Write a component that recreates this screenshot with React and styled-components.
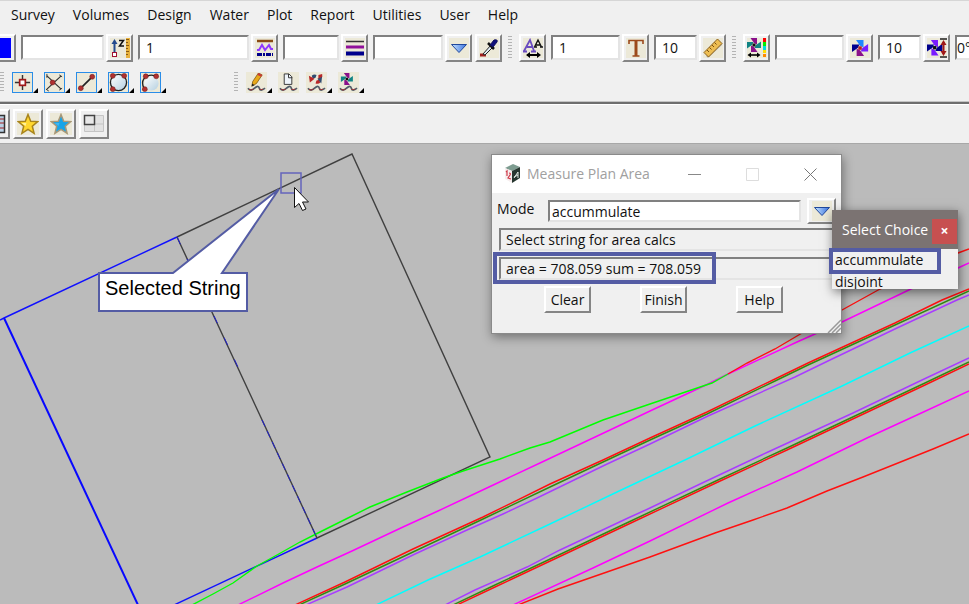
import React, { useState } from "react";
import styled, { createGlobalStyle } from "styled-components";

const GlobalStyle = createGlobalStyle`
	* {
		box-sizing: border-box;
	}
	body {
		margin: 0;
		overflow: hidden;
		font-family: "Open Sans", "Noto Sans", sans-serif;
		font-size: 14px;
		color: #111;
	}
	button,
	input {
		font: inherit;
		color: inherit;
	}
	svg {
		display: block;
	}
`;

const Wrapper = styled.div`
	min-height: 100vh;
	display: flex;
	flex-direction: column;
	background-color: #f0f0f0;
`;

//Menu

const Menu = styled.nav`
	display: flex;
	gap: 18px;
	height: 30px;
	padding: 0 0 2px 11px;
	border-top: 1px solid #d6d6d6;
	overflow: hidden;
`;

const MenuButton = styled.button`
	padding: 0;
	border: 0;
	background: none;
	white-space: nowrap;
`;

//Toolbars

const Toolbar = styled.div`
	display: flex;
	align-items: center;
	height: ${(props) => props.$height}px;
	overflow: hidden;
`;

const FieldBar = styled(Toolbar)`
	gap: 5px;
`;

const SnapBar = styled(Toolbar)`
	gap: 6px;
	padding-bottom: 1px;
	margin: 0 0 2px -1px;
`;

const FavouriteBar = styled(Toolbar)`
	gap: 3px;
	border-top: 2px solid #6e6e6e;
	border-bottom: 1px solid #a8a8a8;
	box-shadow: inset 0 1px 0 #fff;
	outline: 1px solid #c4c4c4;
	outline-offset: 0;
`;

const Group = styled.div`
	display: flex;
	align-items: center;
	gap: ${(props) => props.$gap || 2}px;
	flex: none;
`;

const Grip = styled.span`
	flex: none;
	width: 4px;
	height: ${(props) => props.$height || 24}px;
	margin: 0 2px 0 1px;
	background: repeating-linear-gradient(#b4b4b4 0 1px, #f0f0f0 1px 3px);
`;

const Raised = styled.button`
	display: flex;
	flex: none;
	align-items: center;
	justify-content: center;
	padding: 0;
	border: 2px solid;
	border-color: #fff #858585 #858585 #fff;
	background-color: #f0f0f0;
`;

const ToolButton = styled(Raised)`
	width: 27px;
	height: 28px;
`;

const BigButton = styled(Raised)`
	width: 30px;
	height: 30px;
`;

const Clipped = styled(BigButton)`
	width: 10px;
	border-left: 0;
	justify-content: flex-start;
`;

const Swatch = styled(ToolButton)`
	width: 16px;
	border-left: 0;
	justify-content: flex-start;
`;

const SwatchColor = styled.span`
	width: 11px;
	height: 20px;
	background-color: #0000fe;
`;

const Field = styled.input`
	flex: none;
	width: ${(props) => props.$width}px;
	height: 25px;
	padding: 0 0 1px ${(props) => (props.$flush ? 0 : 6)}px;
	border: 2px solid;
	border-color: #808080 #e4e4e4 #e4e4e4 #808080;
	outline: none;
	background-color: #fff;
`;

const SnapButton = styled.button`
	position: relative;
	flex: none;
	width: ${(props) => (props.$menu ? 26 : 22)}px;
	height: 21px;
	padding: 0;
	border: 0;
	background: none;
`;

const SnapIcon = styled.span`
	display: block;
	width: 21px;
	height: 21px;
	padding: ${(props) => (props.$framed ? 0 : 1)}px;
	border: ${(props) => (props.$framed ? "1px solid #2a8de8" : "0")};
	background-color: #ece9d8;
`;

const Corner = styled.span`
	position: absolute;
	right: 0;
	bottom: 0;
	border: solid transparent;
	border-color: transparent transparent #000 transparent;
	border-width: 0 0 5px 5px;
`;

const Spacer = styled.div`
	width: 55px;
	flex: none;
`;

//Plan view

const Plan = styled.main`
	position: relative;
	flex: 1;
	min-height: 460px;
	background-color: #bbb;
	overflow: hidden;
`;

const Drawing = styled.svg`
	position: absolute;
	top: 0;
	left: 0;
	width: 100%;
	height: 100%;
`;

const CalloutText = styled.div`
	position: absolute;
	left: 98px;
	top: 128px;
	height: 40px;
	padding: 0 7px;
	line-height: 32px;
	font-family: "Liberation Sans", Arial, sans-serif;
	font-size: 20px;
	color: #000;
	white-space: nowrap;
`;

//Dialog

const Dialog = styled.section`
	position: absolute;
	left: 491px;
	top: 10px;
	width: 351px;
	border: 1px solid #8a8a8a;
	background-color: #f0f0f0;
	box-shadow: 1px 3px 10px rgba(0, 0, 0, 0.4);
`;

const TitleBar = styled.header`
	display: flex;
	align-items: center;
	height: 38px;
	padding: 0 2px 0 12px;
	background-color: #fff;
	color: #a0a0a0;
`;

const Title = styled.h1`
	flex: 1;
	margin: 0 0 1px 6px;
	font-size: 14px;
	font-weight: 400;
	white-space: nowrap;
`;

const WindowButton = styled.button`
	display: flex;
	align-items: center;
	justify-content: center;
	width: 58px;
	height: 38px;
	padding: 0;
	border: 0;
	background: none;
`;

const Form = styled.form`
	display: flex;
	flex-direction: column;
	padding: 5px 0 20px 5px;
`;

const ModeRow = styled.div`
	display: flex;
	align-items: center;
	gap: 6px;
	padding-right: 5px;
	margin-bottom: 2px;
`;

const Label = styled.label`
	width: 45px;
	padding-bottom: 6px;
`;

const ModeInput = styled(Field)`
	flex: 1;
	min-width: 0;
	height: 22px;
	padding: 0 0 0 2px;
`;

const DropButton = styled(Raised)`
	width: 29px;
	height: 26px;
`;

const Message = styled(Field)`
	width: auto;
	height: 23px;
	margin: 2px 0 4px 2px;
	padding: 0 0 0 5px;
	border-right: 0;
	background-color: #f0f0f0;
`;

const Actions = styled.div`
	display: flex;
	gap: 49px;
	padding: 2px 0 0 47px;
`;

const Action = styled(Raised)`
	width: 47px;
	height: 27px;
`;

const ResizeHandle = styled.svg`
	position: absolute;
	right: 0;
	bottom: 0;
`;

//Choice list

const Choice = styled.section`
	position: absolute;
	left: 832px;
	top: 66px;
	width: 126px;
	height: 79px;
	overflow: hidden;
	background-color: #f0f0f0;
	box-shadow: 1px 3px 10px rgba(0, 0, 0, 0.5);
`;

const ChoiceHeader = styled.header`
	display: flex;
	align-items: center;
	justify-content: space-between;
	height: 39px;
	padding: 4px 1px 0 10px;
	background-color: #7b7372;
	color: #fff;
	white-space: nowrap;
`;

const ChoiceTitle = styled.h2`
	margin: 0 0 4px;
	font-size: 14px;
	font-weight: 400;
`;

const CloseButton = styled.button`
	flex: none;
	width: 25px;
	height: 25px;
	padding: 0 0 2px;
	border: 0;
	background-color: #c75050;
	font-weight: 700;
	color: #fff;
`;

const Options = styled.ul`
	margin: 0;
	padding: 0;
	list-style: none;
`;

const Option = styled.button`
	display: block;
	width: 100%;
	height: 22px;
	padding: 0 3px;
	border: 0;
	background: none;
	line-height: 22px;
	text-align: left;
`;

const Marker = styled.div`
	position: absolute;
	left: ${(props) => props.$left}px;
	top: ${(props) => props.$top}px;
	width: ${(props) => props.$width}px;
	height: ${(props) => props.$height}px;
	border: 4px solid #545ca4;
	pointer-events: none;
`;

//Icons

const Icon = ({ size = 20, children }) => (
	<svg width={size} height={size} viewBox="0 0 20 20" aria-hidden="true">
		<rect width="20" height="20" fill="#ece9d8" />
		{children}
	</svg>
);

const HeightIcon = () => (
	<Icon>
		<path d="M4.500 4v12" stroke="#234a8c" strokeWidth="2" />
		<path d="M1.500 6l3-5 3 5z" fill="#234a8c" />
		<rect x="2.500" y="14.500" width="4" height="4" fill="#fff" stroke="#a01030" />
		<path d="M9 2.500h4.500L9.500 8H14" fill="none" stroke="#111" strokeWidth="1.500" />
		<rect x="16" y="0" width="4" height="20" fill="#e8b23c" />
		<path d="M16 1.500h3M16 4.500h2M16 7.500h3M16 10.500h2M16 13.500h3M16 16.500h2" stroke="#8a5a10" />
	</Icon>
);

const LineStyleIcon = () => (
	<Icon>
		<path d="M2 3h16" stroke="#8a4a12" strokeWidth="2.500" />
		<path d="M2 12h2l3-5 3 5 4-5 2 4h2" fill="none" stroke="#9038ff" strokeWidth="2" />
		<path d="M2 16.500h16" stroke="#00008c" strokeWidth="3" strokeDasharray="5 1 2 1" />
	</Icon>
);

const WeightIcon = () => (
	<Icon>
		<path d="M1 3.500h18" stroke="#333" strokeWidth="1.500" />
		<path d="M1 9h18" stroke="#90109a" strokeWidth="3" />
		<path d="M1 15.500h18" stroke="#00008c" strokeWidth="4" />
	</Icon>
);

const TriangleIcon = () => (
	<svg width="20" height="20" viewBox="0 0 20 20" aria-hidden="true">
		<defs>
			<linearGradient id="drop" x1="0" x2="1">
				<stop offset="0" stopColor="#c6e4ff" />
				<stop offset="1" stopColor="#3a72e0" />
			</linearGradient>
		</defs>
		<rect width="20" height="20" fill="#ece9d8" />
		<path d="M2.500 6.500h15L10 14.500z" fill="url(#drop)" stroke="#20489c" />
	</svg>
);

const DropperIcon = () => (
	<Icon>
		<path d="M1 17h6" stroke="#a02020" strokeWidth="3" />
		<path d="M4 16l8-9 2 2-8 8z" fill="#dfeaf2" stroke="#222" />
		<path d="M9 5l6 6" stroke="#111" strokeWidth="2.500" />
		<path d="M11 7l4-5q4-1 3 2l-4 5z" fill="#10107c" stroke="#10105c" />
	</Icon>
);

const TextSizeIcon = () => (
	<Icon>
		<path d="M1 13l6-11 4 11M4 9h5M0 13.500h4M8 13.500h5" fill="none" stroke="#6a4cc0" strokeWidth="1.800" />
		<path d="M11.500 9L15 2l3.500 7M13 7h4M11 9h3M17 9h3" fill="none" stroke="#111" strokeWidth="1.400" />
		<path d="M4 17h12" stroke="#000" strokeWidth="2" />
		<path d="M7 14l-4 3 4 3zM14 14l4 3-4 3z" />
	</Icon>
);

const FontIcon = () => (
	<Icon>
		<path d="M3 6V2.500h14V6M10 2.500V18M6.500 18h7" fill="none" stroke="#9c4a1c" strokeWidth="1.600" />
		<path d="M10 3v15" stroke="#9c4a1c" strokeWidth="3" />
	</Icon>
);

const RulerIcon = () => (
	<Icon>
		<path d="M3 18L19 5v2L5 20z" fill="#999" opacity=".6" />
		<path d="M1 14.500L14.500 1 19 5.500 5.500 19z" fill="#edbd52" stroke="#8c6018" />
		<path d="M4 12l2 2M6.500 9.500l2 2M9 7l2 2M11.500 4.500l2 2" stroke="#7a5010" />
	</Icon>
);

// four blades around the middle, used by the symbol tools
const Pinwheel = ({ colors, dot = "#111" }) => (
	<g>
		{colors.map((c, i) => (
			<path key={i} d="M3.500 0h6.500v6.500L7 5z" fill={c} transform={`rotate(${i * 90} 7 7)`} />
		))}
		<rect x="5.500" y="5.500" width="3" height="3" fill={dot} />
	</g>
);

const SymbolIcon = () => (
	<Icon>
		<Pinwheel colors={["#8a108a", "#108484", "#8a108a", "#108484"]} />
		<path d="M17.500 0v4" stroke="#f00" strokeWidth="3" />
		<path d="M17.500 4v4" stroke="#0e0" strokeWidth="3" />
		<path d="M17.500 8v4" stroke="#0dd" strokeWidth="3" />
		<path d="M17.500 12v3" stroke="#fd0" strokeWidth="3" />
		<path d="M17.500 16v3" stroke="#f80" strokeWidth="3" />
		<path d="M2 17h10" stroke="#000" strokeWidth="1.600" />
		<path d="M4 14.500L0.500 17 4 19.500zM10 14.500l3.500 2.500-3.500 2.500z" />
	</Icon>
);

const PinwheelIcon = () => (
	<Icon>
		<g transform="translate(2 2) scale(1.15)">
			<Pinwheel colors={["#1f86ff", "#7a1cff", "#8a108a", "#00008c"]} dot="#b02020" />
		</g>
	</Icon>
);

const PinwheelHeightIcon = () => (
	<Icon>
		<g transform="translate(0 2) scale(1.1)">
			<Pinwheel colors={["#7a1cff", "#00008c", "#7a1cff", "#00008c"]} />
		</g>
		<path d="M13 1h7M13 19h7" stroke="#222" strokeWidth="1.500" />
		<path d="M16.500 4v12" stroke="#a01818" strokeWidth="2" />
		<path d="M13.500 7l3-5 3 5zM13.500 13l3 5 3-5z" fill="#a01818" />
	</Icon>
);

const Dot = (props) => <circle r="2.600" fill="#b03030" stroke="#6c1818" strokeWidth=".6" {...props} />;

const Sphere = () => (
	<defs>
		<linearGradient id="sphere" x1="0" y1="0" x2="1" y2="1">
			<stop offset="0" stopColor="#fff" />
			<stop offset="1" stopColor="#b4cfe0" />
		</linearGradient>
	</defs>
);

const snapIcons = {
	point: (
		<Icon size={19}>
			<path d="M10 2v16M2 10h16" stroke="#333" strokeWidth="1.500" />
			<rect x="7" y="7" width="6" height="6" fill="#fff" stroke="#a01818" strokeWidth="1.800" />
		</Icon>
	),
	cross: (
		<Icon size={19}>
			<path d="M2 3l15 14M2 17L17 3" stroke="#333" strokeWidth="1.300" />
			<path d="M2 1v4M1 17l3 2M15 2l3 2M15 18l3-2" stroke="#333" />
			<Dot cx="8" cy="10" />
		</Icon>
	),
	line: (
		<Icon size={19}>
			<path d="M4 16L16 4" stroke="#222" strokeWidth="1.800" />
			<Dot cx="4" cy="16" />
			<Dot cx="16" cy="4" />
		</Icon>
	),
	circle: (
		<Icon size={19}>
			<Sphere />
			<circle cx="10" cy="10" r="8.500" fill="url(#sphere)" stroke="#222" strokeWidth="1.400" />
			<Dot cx="4" cy="3" />
			<Dot cx="16" cy="3" />
			<Dot cx="4" cy="17" />
		</Icon>
	),
	arc: (
		<Icon size={19}>
			<Sphere />
			<circle cx="11" cy="11" r="7.500" fill="url(#sphere)" />
			<path d="M3 16Q-1 7 7 3q5-2 10 1" fill="none" stroke="#222" strokeWidth="1.400" />
			<Dot cx="5" cy="3.500" />
			<Dot cx="16" cy="3.500" />
			<Dot cx="4" cy="17" />
		</Icon>
	),
};

const Wave = () => (
	<g fill="none">
		<path d="M1 16q3 4 7 0t5 0 6 0" stroke="#505c68" strokeWidth="1.800" />
		<path d="M2 17q2 2 5 0M13 17q2 1 4 0" stroke="#a03030" />
	</g>
);

const stringIcons = {
	pencil: (
		<Icon size={19}>
			<Wave />
			<path d="M5 14l1-5 6-9 4 2-6 9z" fill="#e8a818" stroke="#7c5410" strokeWidth=".8" />
			<path d="M12 0l4 2-1 2-4-2z" fill="#c83838" />
			<path d="M5 14l.5-3L8 13z" fill="#222" />
		</Icon>
	),
	page: (
		<Icon size={19}>
			<Wave />
			<path d="M5.500 1h5l3 3v8h-8z" fill="#eef4fa" stroke="#333" />
			<path d="M10 1v4h4" fill="none" stroke="#333" />
		</Icon>
	),
	swap: (
		<Icon size={19}>
			<Wave />
			<path d="M5 3q2-2 5-1l-1 3-3 1z" fill="#304c70" />
			<path d="M2 3l1 7 5-4z" fill="#b82828" />
			<path d="M14 10q-2 2-5 1l1-3 3-1z" fill="#b82828" />
			<path d="M16 3l-1 8-4-5z" fill="#304c70" />
			<path d="M12 2l4-1v3l-4 2z" fill="#b82828" />
		</Icon>
	),
	symbol: (
		<Icon size={19}>
			<Wave />
			<g transform="translate(2 0) scale(.9)">
				<Pinwheel colors={["#8a108a", "#108484", "#8a108a", "#108484"]} />
			</g>
		</Icon>
	),
};

const Star = ({ fill, stroke, light }) => (
	<svg width="22" height="22" viewBox="0 0 22 22" aria-hidden="true">
		<rect width="22" height="22" fill="#ece9d8" />
		<path
			d="M11 1.500l2.700 6.700 7 .4-5.400 4.600 1.800 7.100-6.100-4-6.100 4 1.800-7.100L1.300 8.600l7-.4z"
			fill={fill}
			stroke={stroke}
			strokeWidth="1.500"
		/>
		<path d="M11 5L9.500 10H4.500l4 3z" fill={light} />
	</svg>
);

const LayoutIcon = () => (
	<svg width="22" height="22" viewBox="0 0 22 22" aria-hidden="true">
		<path d="M1.500 2.500h19v16h-19zM1.500 11h19M11.500 2.500v16" fill="#e2e2e2" stroke="#c4c4c4" />
		<rect x="1.500" y="2.500" width="10" height="9" fill="#e8e8e8" stroke="#444" strokeWidth="1.500" />
	</svg>
);

const AppIcon = () => (
	<svg width="17" height="20" viewBox="0 0 17 20" aria-hidden="true">
		<path d="M1 4l8-4 7 3-8 4z" fill="#7d9c90" />
		<path d="M8 7l8-4v11l-8 5z" fill="#26362f" />
		<path d="M1 4l7 3v12l-7-4z" fill="#f6eeee" />
		<path d="M2 8l1-1v5M5 9q2 0 1 2l-2 3 3 1" fill="none" stroke="#d03a4a" strokeWidth="1.200" />
		<path d="M10 14l4-6v6M10 13l4-2" fill="none" stroke="#dfe8e2" />
	</svg>
);

//Data

const menus = ["Survey", "Volumes", "Design", "Water", "Plot", "Report", "Utilities", "User", "Help"];

const strings = [
	{
		id: "cyan",
		color: "#00ffff",
		points: "376,605 428,580 480,557 550,524 617,492 687,459 755,426 840,387 910,353 969,326",
	},
	{
		id: "kerb-top",
		color: "#2f8a10",
		points: "299,605 345,584 413,552 483,519 550,487 603,462 650,440 707,414 775,381 808,365 895,325 969,291",
	},
	{
		id: "lip-top",
		color: "#a83cff",
		points:
			"306,605 347,587 415,554 467,530 503,514 537,498 605,465 650,444 708,416 795,377 830,360 897,328 957,300 969,295",
	},
	{
		id: "back-top",
		color: "#ff1010",
		points: "295,605 345,582 413,549 483,517 550,484 603,460 650,438 707,412 775,379 808,363 895,323 942,300 969,289",
	},
	{
		id: "lip-bottom",
		color: "#a83cff",
		points: "445,605 475,590 527,567 560,550 628,518 650,508 698,485 768,452 853,413 922,380 969,358",
	},
	{
		id: "kerb-bottom",
		color: "#2f8a10",
		points: "453,605 495,585 563,553 633,520 718,480 787,448 857,415 925,383 969,362",
	},
	{
		id: "back-bottom",
		color: "#ff1010",
		points: "457,605 495,587 563,555 633,522 718,482 787,450 857,417 925,385 969,364",
	},
	{
		id: "verge-top",
		color: "#ff00ff",
		points:
			"238,605 283,583 317,567 352,551 403,527 438,511 472,495 540,463 610,430 650,411 708,384 728,374 797,342 842,322 913,288 958,268 969,263",
	},
	{
		id: "verge-bottom",
		color: "#ff00ff",
		points: "513,605 593,568 650,541 728,503 797,472 867,438 917,415 969,391",
	},
	{
		id: "batter-bottom",
		color: "#ff1010",
		points: "518,605 558,589 607,572 650,557 715,533 753,520 787,508 827,491 863,477 933,449 969,434",
	},
	{ id: "batter-top", color: "#ff1010", points: "728,374 747,363 775,349 797,336 842,310 880,289 958,253 969,249" },
	{ id: "lot-left", color: "#1010ff", points: "0,320 4,318 177,237" },
	{ id: "lot-side", color: "#0808ff", points: "4,318 138,605", width: 2 },
	{ id: "lot-front", color: "#1010ff", points: "317,538 174,605" },
	{ id: "lot-selected", color: "#404040", points: "177,237 352,154 490,457 317,538 177,237" },
	{
		id: "surface",
		color: "#00ff00",
		points:
			"192,605 213,594 233,583 257,566 277,555 300,542 320,532 348,518 370,507 407,492 443,478 463,471 500,459 530,448 550,442 603,420 650,404 712,383 728,374",
	},
];

const App = () => {
	const [mode, setMode] = useState("accummulate");
	const [listOpen, setListOpen] = useState(true);

	return (
		<Wrapper>
			<GlobalStyle />
			<Menu>
				{menus.map((m) => (
					<MenuButton key={m}>{m}</MenuButton>
				))}
			</Menu>

			<FieldBar $height={35}>
				<Swatch aria-label="Colour">
					<SwatchColor />
				</Swatch>
				<Group>
					<Field $width={83} aria-label="Name" />
					<ToolButton aria-label="Height">
						<HeightIcon />
					</ToolButton>
				</Group>
				<Group>
					<Field $width={111} defaultValue="1" aria-label="Line style" />
					<ToolButton aria-label="Pick line style">
						<LineStyleIcon />
					</ToolButton>
				</Group>
				<Group>
					<Field $width={56} aria-label="Weight" />
					<ToolButton aria-label="Pick weight">
						<WeightIcon />
					</ToolButton>
				</Group>
				<Group>
					<Field $width={70} aria-label="Tinable" />
					<Group $gap={3}>
						<ToolButton aria-label="Open list">
							<TriangleIcon />
						</ToolButton>
						<ToolButton aria-label="Pick from string">
							<DropperIcon />
						</ToolButton>
					</Group>
				</Group>
				<Grip />
				<ToolButton aria-label="Text style">
					<TextSizeIcon />
				</ToolButton>
				<Group>
					<Field $width={69} defaultValue="1" aria-label="Text style name" />
					<ToolButton aria-label="Font">
						<FontIcon />
					</ToolButton>
				</Group>
				<Group>
					<Field $width={43} defaultValue="10" aria-label="Text size" />
					<ToolButton aria-label="Measure size">
						<RulerIcon />
					</ToolButton>
				</Group>
				<Grip />
				<ToolButton aria-label="Symbol style">
					<SymbolIcon />
				</ToolButton>
				<Group>
					<Field $width={69} aria-label="Symbol name" />
					<ToolButton aria-label="Pick symbol">
						<PinwheelIcon />
					</ToolButton>
				</Group>
				<Group>
					<Field $width={43} defaultValue="10" aria-label="Symbol size" />
					<ToolButton aria-label="Symbol height">
						<PinwheelHeightIcon />
					</ToolButton>
				</Group>
				<Field $width={60} $flush defaultValue="0°" aria-label="Symbol angle" />
			</FieldBar>

			<SnapBar $height={35}>
				<Grip $height={20} />
				{Object.keys(snapIcons).map((k) => (
					<SnapButton key={k} $menu aria-label={`Snap ${k}`}>
						<SnapIcon $framed>{snapIcons[k]}</SnapIcon>
						<Corner />
					</SnapButton>
				))}
				<Spacer />
				<Grip $height={20} />
				{Object.keys(stringIcons).map((k) => (
					<SnapButton key={k} $menu={k !== "page"} aria-label={`String ${k}`}>
						<SnapIcon>{stringIcons[k]}</SnapIcon>
						{k !== "page" && <Corner />}
					</SnapButton>
				))}
			</SnapBar>

			<FavouriteBar $height={42}>
				<Clipped aria-label="Table">
					<svg width="6" height="20" viewBox="0 0 6 20" aria-hidden="true">
						<path d="M0 1.500h4.500v17H0" fill="#b8d0e4" stroke="#333" strokeWidth="1.500" />
						<path d="M0 5h4M0 9h4M0 14h4" stroke="#a02020" />
					</svg>
				</Clipped>
				<BigButton aria-label="Favourites">
					<Star fill="#ffd72e" stroke="#a8841c" light="#fff29a" />
				</BigButton>
				<BigButton aria-label="User favourites">
					<Star fill="#18a4e8" stroke="#a89878" light="#3cb8f4" />
				</BigButton>
				<BigButton aria-label="Layout">
					<LayoutIcon />
				</BigButton>
			</FavouriteBar>

			<Plan>
				<Drawing>
					<g transform="translate(0 -144)">
						<g fill="none">
							{strings.map((s) => (
								<polyline key={s.id} points={s.points} stroke={s.color} strokeWidth={s.width || 1.4} />
							))}
							<path d="M177 237l24 52M214 316l30 64" stroke="#2020d0" strokeDasharray="8 16" />
							<path d="M262 420l55 118" stroke="#2020d0" strokeDasharray="7 5" />
						</g>
						<path
							d="M99 273H173L279 189 222 273H247V311H99z"
							fill="#fff"
							stroke="#545ca4"
							strokeWidth="2"
						/>
						<rect x="281" y="173" width="20" height="20" fill="none" stroke="#6464bc" strokeWidth="1.500" />
						<path
							d="M294.500 187.500v20l4.500-4 3.500 7 3.500-1.500-3.500-7h6z"
							fill="#fff"
							stroke="#111"
						/>
					</g>
				</Drawing>
				<CalloutText>Selected String</CalloutText>

				<Dialog aria-label="Measure Plan Area">
					<TitleBar>
						<AppIcon />
						<Title>Measure Plan Area</Title>
						<WindowButton aria-label="Minimize">
							<svg width="13" height="13" stroke="#888">
								<path d="M0 6.500h13" />
							</svg>
						</WindowButton>
						<WindowButton aria-label="Maximize" disabled>
							<svg width="13" height="13" stroke="#ddd" fill="none">
								<path d="M.5.500h12v12H.5z" />
							</svg>
						</WindowButton>
						<WindowButton aria-label="Close">
							<svg width="13" height="13" stroke="#777">
								<path d="M.5.500l12 12M12.500.500l-12 12" />
							</svg>
						</WindowButton>
					</TitleBar>
					<Form onSubmit={(e) => e.preventDefault()}>
						<ModeRow>
							<Label htmlFor="mode">Mode</Label>
							<ModeInput id="mode" value={mode} onChange={(e) => setMode(e.target.value)} />
							<DropButton
								type="button"
								aria-label="Choose mode"
								onClick={() => setListOpen((prev) => !prev)}
							>
								<TriangleIcon />
							</DropButton>
						</ModeRow>
						<Message readOnly aria-label="Prompt" value="Select string for area calcs" />
						<Message readOnly aria-label="Result" value="area = 708.059 sum = 708.059" />
						<Actions>
							<Action type="button">Clear</Action>
							<Action type="button">Finish</Action>
							<Action type="button">Help</Action>
						</Actions>
					</Form>
					<ResizeHandle width="14" height="14" stroke="#999" strokeWidth="1.500">
						<path d="M1 14L14 1M5 14l9-9M9 14l5-5" />
					</ResizeHandle>
				</Dialog>
				<Marker $left={493} $top={108} $width={223} $height={32} />

				{listOpen && (
					<>
						<Choice aria-label="Select Choice">
							<ChoiceHeader>
								<ChoiceTitle>Select Choice</ChoiceTitle>
								<CloseButton aria-label="Close list" onClick={() => setListOpen(false)}>
									×
								</CloseButton>
							</ChoiceHeader>
							<Options>
								{["accummulate", "disjoint"].map((o) => (
									<li key={o}>
										<Option onClick={() => setMode(o)}>{o}</Option>
									</li>
								))}
							</Options>
						</Choice>
						<Marker $left={829} $top={104} $width={112} $height={26} />
					</>
				)}
			</Plan>
		</Wrapper>
	);
};

export default App;
